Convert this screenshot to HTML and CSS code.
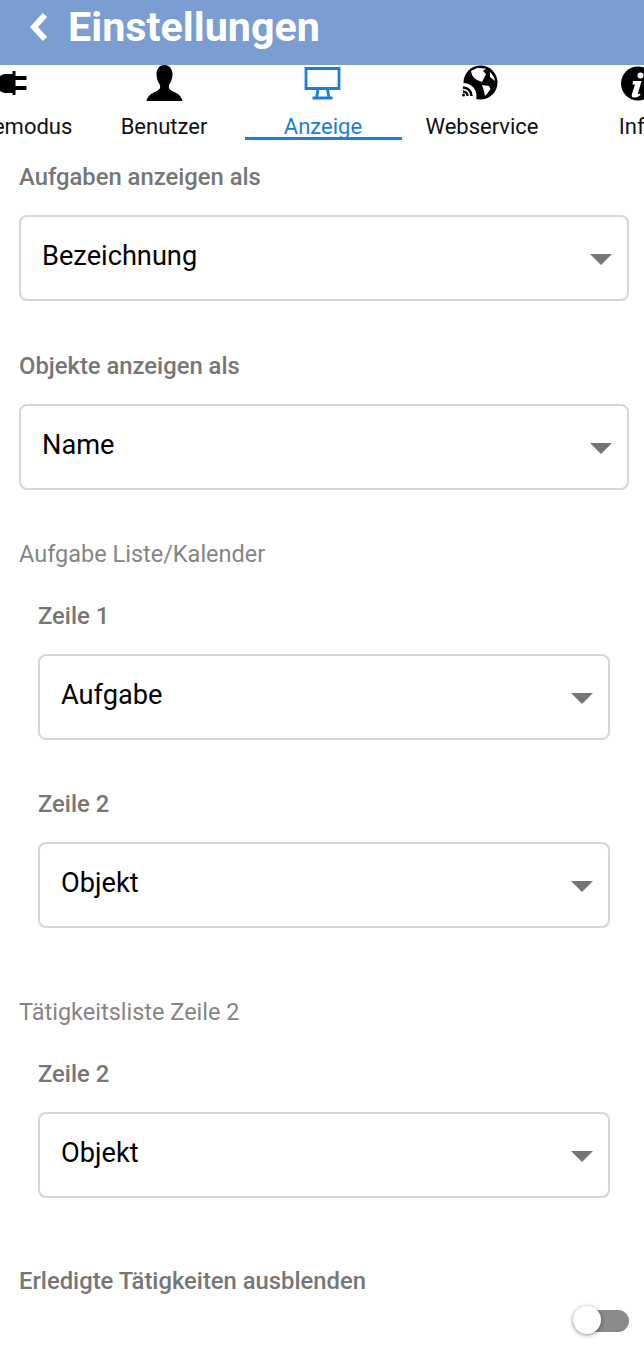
FILE: index.html
```html
<!DOCTYPE html>
<html lang="de">
<head>
    <meta charset="UTF-8">
    <meta name="viewport" content="width=device-width, initial-scale=1.0">
    <title>Einstellungen</title>
    <link rel="stylesheet" href="styles.css">
</head>
<body>

    <header class="topbar">
        <svg class="back-icon" viewBox="0 0 22 30"><path d="M17 3 L6 15 L17 27" /></svg>
        <h1>Einstellungen</h1>
    </header>

    <nav class="tabs">
        <div class="tab tab-edge">
            <svg class="tab-icon" viewBox="0 0 40 40">
                <path d="M27.500 6 H30.500 V11 H41.500 V15 H30.500 V21 H41.500 V25 H30.500 V30 H27.500 V28 H20 Q12 27 12 18.500 Q12 10 20 9 H27.500 Z" />
            </svg>
            <span>Energiemodus</span>
        </div>
        <div class="tab">
            <svg class="tab-icon" viewBox="0 0 40 40">
                <path d="M20.500 0 C26 0 29 5 28.500 10.500 C28 15 26.500 18 25 20 C24.500 23 25 24.500 29 26.500 C34 28.500 37.500 31 38.500 36 H2.500 C3.500 31 7 28.500 12 26.500 C16 24.500 16.500 23 16 20 C14.500 18 13 15 12.500 10.500 C12 5 15 0 20.500 0 Z" />
            </svg>
            <span>Benutzer</span>
        </div>
        <div class="tab tab-active">
            <svg class="tab-icon" viewBox="0 0 40 40">
                <path class="line" d="M3 3.500 H36 V23.500 H3 Z" />
                <path class="line" d="M15 24 L13.500 33 M24.500 24 L26 33 M9.500 33 H29.500" />
            </svg>
            <span>Anzeige</span>
        </div>
        <div class="tab">
            <svg class="tab-icon" viewBox="0 0 40 40">
                <circle cx="18.500" cy="17.500" r="17" />
                <path class="land" d="M9 6 L15 3 L24 3.500 L21 6 L24 9 L22 13 L20 17 L15 15 L12 13 L10 10 Z" />
                <path class="land" d="M20 20 L27 21 L28.500 24 L25 29 L23 31 L22 26 Z" />
                <path class="land" d="M28 7 L32 12 L33 16 L28 12 Z" />
                <circle class="land" cx="1.500" cy="31" r="13" />
                <path class="waves" d="M1 22.500 A8.500 8.500 0 0 1 9.500 31 M1 26.500 A4.500 4.500 0 0 1 5.500 31" />
                <circle cx="1.500" cy="30" r="1.500" />
            </svg>
            <span>Webservice</span>
        </div>
        <div class="tab tab-edge">
            <svg class="tab-icon" viewBox="0 0 40 40">
                <circle cx="17" cy="18.500" r="17" />
                <g transform="translate(-4 1)">
                    <circle class="land" cx="23.500" cy="9.500" r="3" />
                    <path class="land" d="M16 15 H24.500 L21 27 Q20.500 29 23 27.500 L23.500 29 Q20 32 16.500 31.500 Q14 31 15 28 L18 18.500 H15.500 Z" />
                </g>
            </svg>
            <span>Info</span>
        </div>
    </nav>

    <main class="settings">
        <div class="field">
            <div class="field-label">Aufgaben anzeigen als</div>
            <div class="select-box"><span>Bezeichnung</span><i class="arrow"></i></div>
        </div>

        <div class="field">
            <div class="field-label">Objekte anzeigen als</div>
            <div class="select-box"><span>Name</span><i class="arrow"></i></div>
        </div>

        <section class="group">
            <div class="group-title">Aufgabe Liste/Kalender</div>
            <div class="field">
                <div class="field-label">Zeile 1</div>
                <div class="select-box"><span>Aufgabe</span><i class="arrow"></i></div>
            </div>
            <div class="field">
                <div class="field-label">Zeile 2</div>
                <div class="select-box"><span>Objekt</span><i class="arrow"></i></div>
            </div>
        </section>

        <section class="group">
            <div class="group-title">Tätigkeitsliste Zeile 2</div>
            <div class="field">
                <div class="field-label">Zeile 2</div>
                <div class="select-box"><span>Objekt</span><i class="arrow"></i></div>
            </div>
        </section>

        <div class="toggle-row">
            <div class="field-label">Erledigte Tätigkeiten ausblenden</div>
            <div class="toggle"><div class="toggle-knob"></div></div>
        </div>
    </main>

</body>
</html>
```

FILE: styles.css
```css
* {
    box-sizing: border-box;
}

html,
body {
    height: 1352px;
    overflow: hidden;
}

body {
    margin: 0;
    background-color: #fff;
    font-family: Roboto, "Liberation Sans", sans-serif;
}

.topbar {
    display: flex;
    align-items: center;
    height: 65px;
    padding: 0 0 11px 28px;
    background-color: #7a9dd2;
    color: #fff;
}

.topbar h1 {
    margin: 0 0 0 18px;
    font-size: 41.300px;
    line-height: 48px;
    font-weight: 700;
}

.back-icon {
    width: 22px;
    height: 30px;
    fill: none;
    stroke: #fff;
    stroke-width: 6;
}

.tabs {
    display: flex;
    justify-content: center;
    gap: 2px;
    height: 76px;
    padding-left: 2px;
    overflow: hidden;
}

.tab {
    display: flex;
    flex: none;
    flex-direction: column;
    align-items: center;
    width: 157px;
    height: 75px;
    font-size: 22px;
    line-height: 26px;
    color: #111;
    white-space: nowrap;
}

.tab span {
    margin-top: 9px;
}

.tab-edge span {
    margin-right: 6px;
}

.tab-icon {
    width: 40px;
    height: 40px;
    flex: none;
    overflow: visible;
    fill: #000;
}

.tab-icon .land {
    fill: #fff;
}

.tab-icon .waves {
    fill: none;
    stroke: #000;
    stroke-width: 2.500;
}

.tab-icon .line {
    fill: none;
    stroke: #1a7fdc;
    stroke-width: 2.800;
}

.tab-active {
    border-bottom: 3px solid #1a7fdc;
    color: #1a7fdc;
}

.settings {
    padding: 0 15px 0 19px;
}

.field {
    padding-top: 23px;
}

.field + .field {
    padding-top: 52px;
}

.field-label {
    font-size: 23.800px;
    line-height: 26px;
    font-weight: 500;
    color: #767676;
}

.select-box {
    display: flex;
    align-items: center;
    justify-content: space-between;
    height: 86px;
    margin-top: 25px;
    padding: 0 15px 4px 21px;
    border: 2px solid #d6d6d6;
    border-radius: 8px;
    font-size: 27.200px;
    color: #000;
}

.arrow {
    width: 0;
    height: 0;
    margin-top: 7px;
    border-left: 11px solid transparent;
    border-right: 11px solid transparent;
    border-top: 11px solid #757575;
}

.group {
    margin-top: 51px;
}

.group + .group {
    margin-top: 71px;
}

.group-title {
    font-size: 23.500px;
    line-height: 26px;
    color: #858585;
}

.group .field {
    margin-left: 19px;
    padding-right: 19px;
}

.group .group-title + .field {
    padding-top: 36px;
}

.group .field + .field {
    padding-top: 51px;
}

.toggle-row {
    margin-top: 70px;
}

.toggle {
    position: relative;
    width: 56px;
    height: 22px;
    margin: 16px 0 0 auto;
    border-radius: 11px;
    background-color: #8a8a8a;
}

.toggle-knob {
    position: absolute;
    left: 0;
    top: -4px;
    width: 28px;
    height: 28px;
    border-radius: 50%;
    background-color: #fff;
    box-shadow: 0 1px 4px rgba(0, 0, 0, 0.45);
}
```
